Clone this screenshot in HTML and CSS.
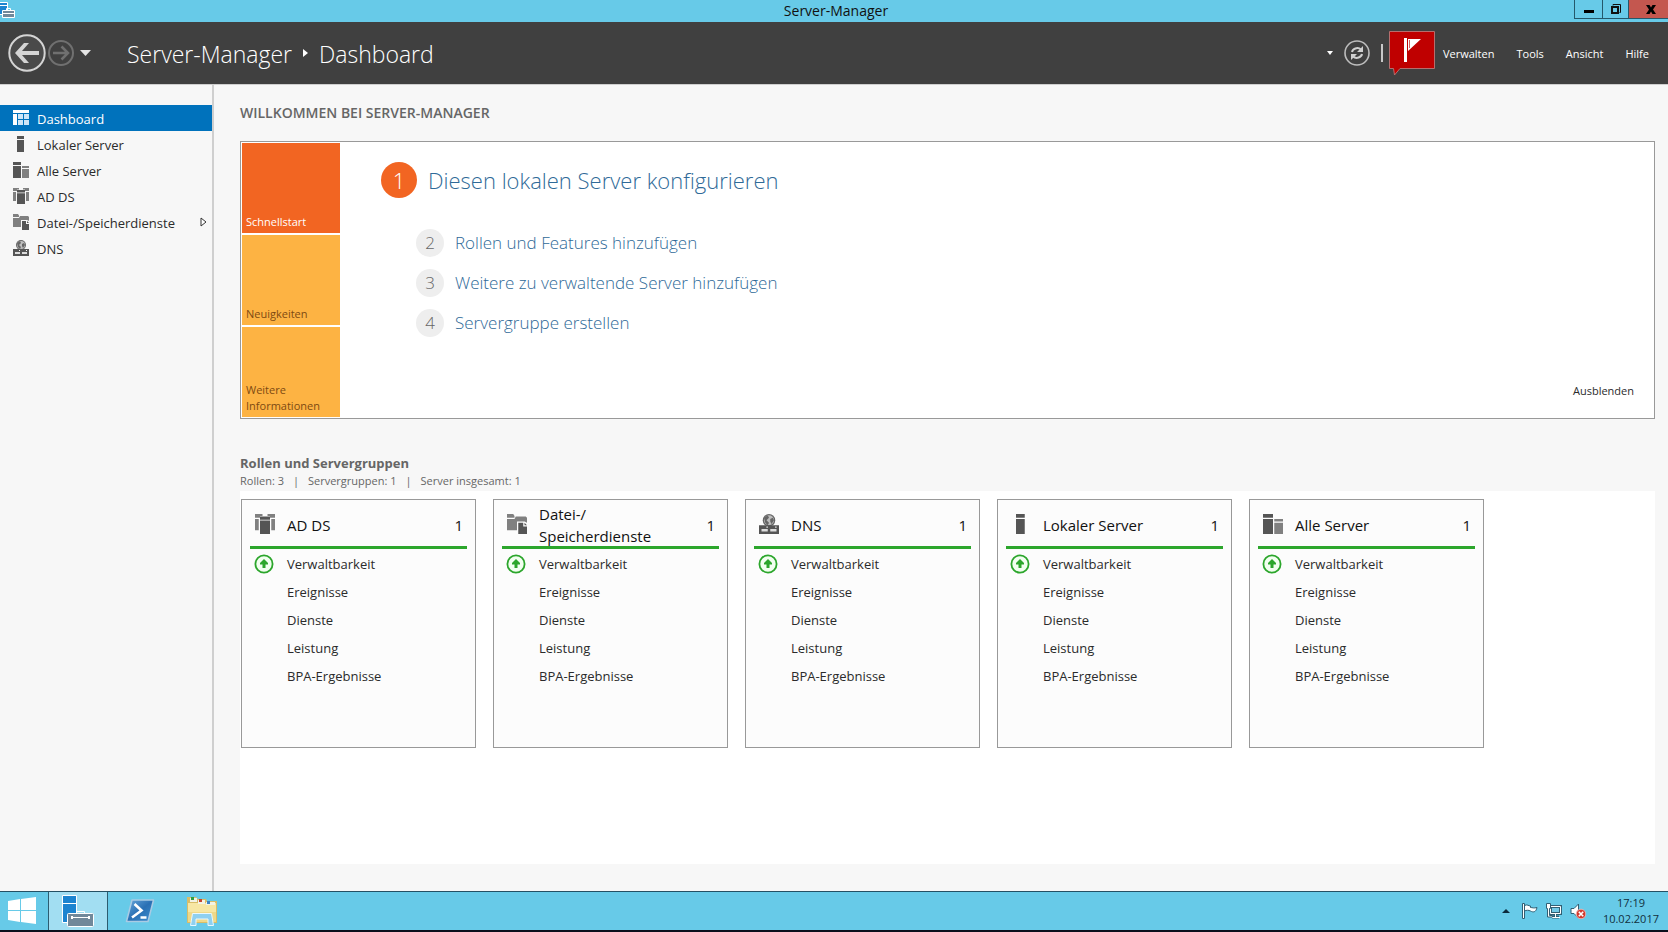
FILE: index.html
```html
<!DOCTYPE html>
<html lang="de">
<head>
<meta charset="utf-8">
<meta name="viewport" content="width=device-width, initial-scale=1">
<title>Server-Manager</title>
<link rel="stylesheet" href="styles.css">
</head>
<body>
<svg class="sprite" aria-hidden="true">
  <symbol id="i-dashboard" viewBox="0 0 16 16"><path fill="#fff" d="M0 0h16v3H0zM0 4h4v11H0z"/><path fill="#cfe6f7" d="M5 4h5v5H5zM11 4h5v5h-5zM5 10h5v5H5zM11 10h5v5h-5z"/></symbol>
  <symbol id="i-local" viewBox="0 0 16 16"><path fill="#555" d="M4 0h7v3H4zM4 4h7v12H4z"/></symbol>
  <symbol id="i-all" viewBox="0 0 16 16"><path fill="#555" d="M0 0h8v3H0zM0 4h8v12H0z"/><path fill="#808080" d="M9 4h7v2H9zM9 7h7v9H9z"/></symbol>
  <symbol id="i-adds" viewBox="0 0 16 16"><path fill="#808080" d="M0 0h6v1.500H4V3H0zM0 4h3v9H0zM10 0h6v3h-4V1.500h-2zM13 4h3v9h-3z"/><path fill="#555" d="M4 2h8v2.500H4zM4 5.200h8V16H4z"/></symbol>
  <symbol id="i-files" viewBox="0 0 16 16"><path fill="#808080" d="M0 0h5l1 1.500V3H0zM0 4h6l1-2h8l1 1v4l-2-1H8v7H0z"/><path fill="#555" d="M9 7h4v3h3v6H9z"/><path fill="#555" d="M14 7l2 2h-2z"/></symbol>
  <symbol id="i-dns" viewBox="0 0 16 16"><circle cx="8" cy="5" r="5" fill="#666"/><circle cx="8" cy="5" r="4" fill="#bdbdbd"/><path fill="#666" d="M4 3l3-2 1 2-2 2 2 2-1 2-2-2zM9 4l2-1 1 2-2 3-1-2z"/><path fill="#555" d="M0 9h16v7H0z"/><path fill="#ddd" d="M2 12h5v2H2zM9 12h5v2H9z"/><path fill="#fff" d="M6 10h1v1H6zM13 10h1v1h-1z"/></symbol>
  <symbol id="i-up" viewBox="0 0 20 20"><circle cx="10" cy="10" r="8.600" fill="#f2fff0" stroke="#2ca62c" stroke-width="1.800"/><path fill="#2ca62c" d="M10 5l4 4v1.500h-2.500V14h-3v-3.500H6V9z"/></symbol>
  <symbol id="i-manager" viewBox="0 0 32 32"><path fill="#1c84d0" stroke="#fff" d="M.5.500h14v27H.5z"/><path stroke="#fff" d="M1 8.500h13"/><path fill="none" stroke="#fff" d="M14.500 19v-2.500h8V19"/><rect x="5.500" y="18.500" width="26" height="13" rx="1" fill="#71889a" stroke="#fff"/><path stroke="#fff" d="M9 22.500h19"/><path fill="#fff" d="M9 21h2v3H9zM26 21h2v3h-2z"/></symbol>
</svg>

<header class="titlebar">
  <svg class="titlebar-icon" viewBox="0 0 16 16" aria-hidden="true"><path fill="#1c84d0" stroke="#fff" d="M-1 .5h8.500v12H-1zM0 3.500h7"/><path fill="none" stroke="#fff" d="M6.500 8.500v-2h4v2"/><path fill="#71889a" stroke="#fff" d="M2.500 8.500h12v7h-12zM3 11.500h11"/></svg>
  <span class="titlebar-text">Server-Manager</span>
  <div class="window-buttons">
    <button type="button" class="win-btn" aria-label="Minimieren"><svg width="10" height="10"><path d="M0 6h10v3H0z"/></svg></button>
    <button type="button" class="win-btn win-restore" aria-label="Wiederherstellen"><svg width="10" height="10" fill="none" stroke="#111"><path d="M2 1.500V.5h7.500v8H8.500"/><path stroke-width="2" d="M1 3h6v6H1z"/></svg></button>
    <button type="button" class="win-btn win-close" aria-label="Schließen"><svg width="10" height="9"><path d="M0 0h3.500L5 2.600 6.500 0H10L7 4.500 10 9H6.500L5 6.400 3.500 9H0l3-4.500z"/></svg></button>
  </div>
</header>

<div class="toolbar">
  <div class="history">
    <button type="button" aria-label="Zurück"><svg width="38" height="38" viewBox="0 0 38 38"><circle cx="19" cy="19" r="17.700" fill="#4a4a4a" stroke="#d4d4d4" stroke-width="2"/><path fill="#d4d4d4" d="M7 19l9-10h5l-7 8h17v4H14l7 8h-5z"/></svg></button>
    <button type="button" aria-label="Vorwärts"><svg width="26" height="26" viewBox="0 0 26 26" fill="none" stroke="#707070"><circle cx="13" cy="13" r="12" stroke-width="2"/><path stroke-width="2.500" d="M5 13h15M13.500 6.500L20 13l-6.500 6.500"/></svg></button>
    <button type="button" aria-label="Verlauf"><svg width="11" height="6"><path fill="#e4e4e4" d="M0 0h11L5.500 6z"/></svg></button>
  </div>
  <div class="breadcrumb">
    <span>Server-Manager</span>
    <svg width="5" height="8" aria-hidden="true"><path fill="#fff" d="M0 0l5 4-5 4z"/></svg>
    <h1>Dashboard</h1>
  </div>
  <div class="tools">
    <button type="button" class="tools-more" aria-label="Mehr"><svg width="6" height="4"><path fill="#fff" d="M0 0h6L3 4z"/></svg></button>
    <button type="button" aria-label="Aktualisieren"><svg width="26" height="26" viewBox="0 0 26 26" fill="none"><circle cx="13" cy="13" r="12" stroke="#bdbdbd" stroke-width="1.600"/><path stroke="#d0d0d0" stroke-width="2" d="M8 12c.5-3 5.500-5.500 9-2.500M18 14c-.5 3-5.500 5.500-9 2.500"/><path fill="#d0d0d0" d="M19 6v6h-6zM7 20v-6h6z"/></svg></button>
    <span class="tools-divider"></span>
    <button type="button" aria-label="Benachrichtigungen"><svg width="46" height="46" viewBox="0 0 46 46"><path fill="#bf0000" stroke="#b56e6e" d="M.5 1.500h45v37H11L5.500 45l-1-6.500h-4z"/><path fill="#fff" d="M15 8h3v24h-3zM19 9h13L19 21z"/><path fill="none" stroke="#c66" d="M20.500 10v8"/></svg></button>
    <nav class="menu" aria-label="Menü">
      <button type="button">Verwalten</button>
      <button type="button">Tools</button>
      <button type="button">Ansicht</button>
      <button type="button">Hilfe</button>
    </nav>
  </div>
</div>

<div class="workspace">
  <nav class="sidebar" aria-label="Navigation">
    <a href="#" class="nav-item active" aria-current="page"><svg><use href="#i-dashboard"/></svg>Dashboard</a>
    <a href="#" class="nav-item"><svg><use href="#i-local"/></svg>Lokaler Server</a>
    <a href="#" class="nav-item"><svg><use href="#i-all"/></svg>Alle Server</a>
    <a href="#" class="nav-item"><svg><use href="#i-adds"/></svg>AD DS</a>
    <a href="#" class="nav-item"><svg><use href="#i-files"/></svg>Datei-/Speicherdienste<svg class="nav-arrow" viewBox="0 0 7 10"><path fill="#fff" stroke="#333" d="M1 1l5 4-5 4z"/></svg></a>
    <a href="#" class="nav-item"><svg><use href="#i-dns"/></svg>DNS</a>
  </nav>

  <main class="content">
    <h2 class="welcome-title">WILLKOMMEN BEI SERVER-MANAGER</h2>
    <section class="welcome">
      <div class="tiles">
        <button type="button" class="tile tile-active">Schnellstart</button>
        <button type="button" class="tile">Neuigkeiten</button>
        <button type="button" class="tile">Weitere Informationen</button>
      </div>
      <div class="steps">
        <a href="#" class="step step-main"><span class="step-number">1</span>Diesen lokalen Server konfigurieren</a>
        <a href="#" class="step"><span class="step-number">2</span>Rollen und Features hinzufügen</a>
        <a href="#" class="step"><span class="step-number">3</span>Weitere zu verwaltende Server hinzufügen</a>
        <a href="#" class="step"><span class="step-number">4</span>Servergruppe erstellen</a>
      </div>
      <button type="button" class="hide-button">Ausblenden</button>
    </section>

    <h2 class="groups-title">Rollen und Servergruppen</h2>
    <p class="groups-summary"><span>Rollen: 3</span><span>|</span><span>Servergruppen: 1</span><span>|</span><span>Server insgesamt: 1</span></p>
    <section class="groups">
      <article class="card">
        <h3 class="card-head"><svg><use href="#i-adds"/></svg><span class="card-name">AD DS</span><span>1</span></h3>
        <ul><li><svg><use href="#i-up"/></svg>Verwaltbarkeit</li><li>Ereignisse</li><li>Dienste</li><li>Leistung</li><li>BPA-Ergebnisse</li></ul>
      </article>
      <article class="card">
        <h3 class="card-head"><svg><use href="#i-files"/></svg><span class="card-name">Datei-/<wbr>Speicherdienste</span><span>1</span></h3>
        <ul><li><svg><use href="#i-up"/></svg>Verwaltbarkeit</li><li>Ereignisse</li><li>Dienste</li><li>Leistung</li><li>BPA-Ergebnisse</li></ul>
      </article>
      <article class="card">
        <h3 class="card-head"><svg><use href="#i-dns"/></svg><span class="card-name">DNS</span><span>1</span></h3>
        <ul><li><svg><use href="#i-up"/></svg>Verwaltbarkeit</li><li>Ereignisse</li><li>Dienste</li><li>Leistung</li><li>BPA-Ergebnisse</li></ul>
      </article>
      <article class="card">
        <h3 class="card-head"><svg><use href="#i-local"/></svg><span class="card-name">Lokaler Server</span><span>1</span></h3>
        <ul><li><svg><use href="#i-up"/></svg>Verwaltbarkeit</li><li>Ereignisse</li><li>Dienste</li><li>Leistung</li><li>BPA-Ergebnisse</li></ul>
      </article>
      <article class="card">
        <h3 class="card-head"><svg><use href="#i-all"/></svg><span class="card-name">Alle Server</span><span>1</span></h3>
        <ul><li><svg><use href="#i-up"/></svg>Verwaltbarkeit</li><li>Ereignisse</li><li>Dienste</li><li>Leistung</li><li>BPA-Ergebnisse</li></ul>
      </article>
    </section>
  </main>
</div>

<footer class="taskbar">
  <button type="button" class="task task-start" aria-label="Start"><svg width="28" height="28" viewBox="0 0 28 28"><path fill="#fff" d="M0 4l12-2v11H0zM13 2l15-2v13H13zM0 14h12v11L0 23zM13 14h15v13l-15-2z"/></svg></button>
  <button type="button" class="task task-open" aria-label="Server-Manager"><svg width="32" height="32"><use href="#i-manager"/></svg></button>
  <button type="button" class="task" aria-label="PowerShell"><svg width="30" height="24" viewBox="0 0 30 24"><defs><linearGradient id="g-ps" x1="0" y1="0" x2="1" y2="1"><stop offset="0" stop-color="#6aa9dc"/><stop offset=".5" stop-color="#2a70b4"/><stop offset="1" stop-color="#3f8fd0"/></linearGradient></defs><path fill="url(#g-ps)" stroke="#a9cbe4" stroke-linejoin="round" stroke-width="1.500" d="M7 1h21.500L23 22.500H1.500z"/><path fill="none" stroke="#fff" stroke-width="2.600" d="M9.500 5l7 6.500L7 18.500M15.500 18.500h6"/></svg></button>
  <button type="button" class="task" aria-label="Explorer"><svg width="32" height="30" viewBox="0 0 32 30"><path fill="#d9bd68" d="M1 1h9l2 2h8l1 2h10v22H1z"/><path fill="#f7e7a4" d="M2 7h28v19H2z"/><path fill="#eed98a" d="M2 16h28v10H2z"/><path fill="#f3f3e4" d="M4 2h7v4H4zM12 4h7v4h-7zM20 6h9v3h-9z"/><path fill="#2f9e44" d="M5 1h3v3H5z"/><path fill="#c8442f" d="M13 3h3v3h-3z"/><path fill="#3c83c4" d="M21 5h3v3h-3z"/><path fill="#8fd0f0" stroke="#e8f8ff" d="M4.500 29.500l2-12h19l2 12h-5.500V23H10v6.500z"/></svg></button>
  <div class="tray">
    <svg width="8" height="4" aria-hidden="true"><path fill="#0b2a3c" d="M0 4l4-4 4 4z"/></svg>
    <svg width="16" height="16" aria-hidden="true"><path fill="#fff" stroke="#315f74" d="M.5.500h2v15h-2zM2.500 2.500c3-1.500 4 .5 6 .5v1.500c2 0 3 1 6.500 0-1 5-4 5-6.500 3.500-2-1-4-1-6 0z"/></svg>
    <svg width="16" height="16" aria-hidden="true"><path fill="#73c9e6" stroke="#315f74" stroke-width="3" d="M4.500 3.500h10v7h-10zM9 11v3M6 14h7"/><path fill="none" stroke="#fff" d="M4.500 3.500h10v7h-10zM9.500 11v3M6 14.500h8"/><path fill="#fff" stroke="#315f74" d="M.5.500h4v5h-1v7h3v1.500h-5V5.500h-1z"/></svg>
    <svg width="16" height="16" aria-hidden="true"><path fill="#fff" stroke="#315f74" d="M1 5.500h3L8.500 1v14L4 10.500H1z"/><circle cx="11" cy="11" r="4.800" fill="#d33a2f" stroke="#f3c3bf" stroke-width=".8"/><path stroke="#fff" stroke-width="1.600" d="M8.800 8.800l4.400 4.400M13.200 8.800l-4.400 4.400"/></svg>
    <time class="clock" datetime="2017-02-10T17:19">17:19<br>10.02.2017</time>
  </div>
</footer>
</body>
</html>
```

FILE: styles.css
```css
* {
  box-sizing: border-box;
}

body {
  margin: 0;
  min-height: 100vh;
  display: flex;
  flex-direction: column;
  background: #f7f7f7;
  color: #2b2b2b;
  font: 13px/20px "Open Sans", "Noto Sans", sans-serif;
}

h1, h2, h3, p, ul {
  margin: 0;
  padding: 0;
  font-weight: 400;
}

ul {
  list-style: none;
}

svg {
  display: block;
  flex: none;
}

a {
  color: inherit;
  text-decoration: none;
}

button {
  margin: 0;
  padding: 0;
  border: 0;
  background: none;
  color: inherit;
  font: inherit;
  cursor: pointer;
}

.sprite {
  position: absolute;
  width: 0;
  height: 0;
}

/* Window frame */
.titlebar {
  display: grid;
  grid-template-columns: 1fr auto 1fr;
  height: 22px;
  background: #67cae8;
  color: #111;
}

.titlebar-icon {
  width: 16px;
  height: 16px;
  margin-top: 2px;
}

.titlebar-text {
  padding-left: 4px;
  font-size: 14px;
  line-height: 22px;
}

.window-buttons {
  display: flex;
  justify-content: flex-end;
  height: 19px;
}

.win-btn {
  display: grid;
  place-items: center;
  width: 28px;
  border: 1px solid #24586b;
  border-width: 0 0 1px 1px;
}

.win-restore {
  width: 26px;
}

.win-close {
  width: 40px;
  padding-left: 5px;
  background: #c4574f;
}

/* Toolbar */
.toolbar {
  display: flex;
  align-items: center;
  height: 63px;
  padding: 0 19px 0 8px;
  border-bottom: 1px solid #cfcfcf;
  background: #404040;
  color: #fff;
}

.history {
  display: flex;
  align-items: center;
  gap: 2px;
}

.history button:last-child {
  padding-left: 4px;
}

.breadcrumb {
  display: flex;
  align-items: center;
  gap: 11px;
  padding: 2px 0 0 36px;
  font-size: 23px;
  font-weight: 300;
  line-height: 32px;
}

.breadcrumb svg {
  margin-bottom: 2px;
}

.breadcrumb h1 {
  font-size: 23px;
  font-weight: 300;
}

.tools {
  display: flex;
  align-items: center;
  margin-left: auto;
}

.tools-more {
  padding-right: 11px;
}

.tools-divider {
  width: 2px;
  height: 18px;
  margin: 0 6px 0 11px;
  background: #c8c8c8;
}

.menu {
  display: flex;
  gap: 22px;
  padding: 2px 0 0 8px;
  font-size: 11px;
  font-weight: 500;
}

/* Navigation */
.workspace {
  display: flex;
  flex: 1;
}

.sidebar {
  flex: none;
  width: 214px;
  padding-top: 20px;
  border-right: 2px solid #cfcfcf;
}

.nav-item {
  display: flex;
  align-items: center;
  gap: 8px;
  height: 26px;
  padding: 2px 5px 0 13px;
}

.nav-item svg {
  width: 16px;
  height: 16px;
  margin-bottom: 2px;
}

.nav-item .nav-arrow {
  width: 7px;
  height: 10px;
  margin-left: auto;
}

.nav-item.active {
  background: #0072bc;
  color: #fff;
}

/* Welcome panel */
.content {
  display: flex;
  flex: 1;
  flex-direction: column;
  padding: 18px 13px 27px 26px;
}

.welcome-title,
.groups-title {
  color: #666;
  font-size: 13px;
  font-weight: 700;
}

.welcome-title {
  font-size: 14px;
  font-weight: 600;
}

.welcome {
  display: flex;
  margin-top: 18px;
  padding: 1px;
  border: 1px solid #999;
  background: #fff;
}

.tiles {
  display: grid;
  gap: 2px;
  width: 98px;
}

.tile {
  display: flex;
  align-items: flex-end;
  height: 90px;
  padding: 4px 4px 3px;
  background: #fdb343;
  color: #7d4a12;
  font-size: 11px;
  line-height: 16px;
  text-align: left;
}

.tile-active {
  background: #f26522;
  color: #fff;
}

.steps {
  flex: 1;
  padding: 19px 0 0 41px;
}

.step {
  display: flex;
  align-items: center;
  gap: 11px;
  height: 40px;
  padding-left: 35px;
  color: #2f6a98;
  font-size: 17px;
  font-weight: 300;
}

.step-number {
  display: grid;
  place-items: center;
  width: 28px;
  height: 28px;
  border-radius: 50%;
  background: #eee;
  color: #666;
}

.step-main {
  height: 36px;
  margin-bottom: 25px;
  padding-left: 0;
  font-size: 22px;
}

.step-main .step-number {
  width: 36px;
  height: 36px;
  background: #f26522;
  color: #fff;
}

.hide-button {
  align-self: flex-end;
  margin: 0 19px 16px 0;
  font-size: 11px;
}

/* Role and group cards */
.groups-title {
  margin-top: 34px;
}

.groups-summary {
  display: flex;
  gap: 9px;
  margin-bottom: 2px;
  color: #666;
  font-size: 11px;
  line-height: 16px;
}

.groups {
  display: flex;
  flex: 1;
  flex-wrap: wrap;
  align-items: flex-start;
  gap: 17px;
  padding: 8px 1px;
  background: #fff;
}

.card {
  width: 235px;
  min-height: 249px;
  padding: 0 8px;
  border: 1px solid #999;
  background: #fcfcfc;
}

.card-head {
  display: flex;
  align-items: center;
  height: 49px;
  padding: 3px 4px 0 5px;
  border-bottom: 3px solid #2ca62c;
  color: #111;
  font-size: 15px;
  line-height: 22px;
}

.card-head svg {
  width: 20px;
  height: 20px;
  margin-bottom: 2px;
}

.card-name {
  flex: 1;
  padding: 0 40px 0 12px;
}

.card ul {
  padding-top: 1px;
}

.card li {
  display: flex;
  align-items: center;
  height: 28px;
  padding-left: 37px;
}

.card li svg {
  width: 20px;
  height: 20px;
  margin: 0 13px 0 -33px;
}

/* Taskbar */
.taskbar {
  display: flex;
  height: 41px;
  border-top: 1px solid #245064;
  border-bottom: 2px solid #0a0f1c;
  background: #67cae8;
  color: #12303e;
}

.task {
  display: grid;
  place-items: center;
  width: 62px;
}

.task-start {
  width: 48px;
  padding-right: 4px;
}

.task-open {
  width: 60px;
  margin-right: 1px;
  border: 1px solid #2c5c70;
  border-width: 0 1px;
  background: #a2def2;
}

.tray {
  display: flex;
  align-items: center;
  gap: 8px;
  margin-left: auto;
  padding-right: 9px;
}

.tray svg:first-child {
  margin-right: 4px;
}

.clock {
  padding-left: 9px;
  font-size: 11px;
  line-height: 16px;
  text-align: center;
}
```
